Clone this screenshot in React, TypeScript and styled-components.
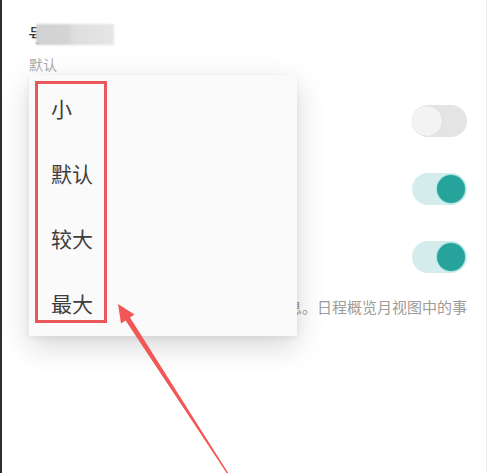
import styled, { createGlobalStyle } from 'styled-components';

const GlobalStyle = createGlobalStyle`
  html, body {
    margin: 0;
    padding: 0;
    background: #ffffff;
  }
  body {
    font-family: 'Noto Sans CJK SC', 'Noto Sans', sans-serif;
  }
`;

const Screen = styled.div`
  position: relative;
  box-sizing: border-box;
  width: 487px;
  height: 473px;
  overflow: hidden;
  background: #ffffff;
  border-left: 2px solid #2e2e2e;
  border-right: 1px solid #ececec;
  padding: 22px 19px 0 26px;
`;

const Title = styled.div`
  display: flex;
  align-items: center;
  height: 24px;
  font-size: 18px;
  color: #333;
`;

const Blurred = styled.span`
  display: inline-block;
  width: 78px;
  height: 21px;
  margin-left: -10px;
  background: linear-gradient(
    90deg,
    #d2d2d2 0%,
    #d4d4d4 40%,
    #dedede 50%,
    #e1e1e1 70%,
    #e6e6e6 100%
  );
  filter: blur(1px);
`;

const Subtitle = styled.div`
  margin-top: 8px;
  height: 20px;
  line-height: 20px;
  font-size: 14px;
  color: #ababab;
  padding-left: 1px;
`;

const Rows = styled.div`
  margin-top: 13px;
  display: flex;
  flex-direction: column;
`;

const Row = styled.div`
  height: 68px;
  display: flex;
  align-items: center;
  justify-content: flex-end;
`;

const Track = styled.div<{ on: boolean }>`
  position: relative;
  width: 55px;
  height: 32px;
  border-radius: 16px;
  background: ${({ on }) => (on ? '#d4ecec' : '#e4e4e4')};
  display: flex;
  align-items: center;
  justify-content: ${({ on }) => (on ? 'flex-end' : 'flex-start')};
  padding: 0 2px;
  box-sizing: border-box;
`;

const Thumb = styled.div<{ on: boolean }>`
  width: ${({ on }) => (on ? '28px' : '30px')};
  height: ${({ on }) => (on ? '28px' : '30px')};
  margin-left: ${({ on }) => (on ? '0' : '-2px')};
  border-radius: 50%;
  background: ${({ on }) => (on ? '#26a39b' : '#f3f3f3')};
  box-shadow: ${({ on }) =>
    on ? '0 0 0 1px rgba(110, 220, 215, 0.45)' : '0 0 1px rgba(0,0,0,0.12)'};
`;

const Description = styled.div`
  margin-top: 6px;
  height: 20px;
  line-height: 20px;
  font-size: 15px;
  color: #9c9c9c;
  text-align: right;
  white-space: nowrap;
`;

const Menu = styled.div`
  position: absolute;
  top: 75px;
  left: 27px;
  width: 268px;
  height: 261px;
  box-sizing: border-box;
  padding-top: 0;
  background: #fafafa;
  box-shadow: 0 10px 28px rgba(0, 0, 0, 0.16), 0 2px 6px rgba(0, 0, 0, 0.06);
  display: flex;
  flex-direction: column;
`;

const MenuItem = styled.div`
  height: 65px;
  display: flex;
  align-items: center;
  padding-left: 22px;
  font-size: 21px;
  color: #3d3d3d;
`;

const Highlight = styled.div`
  position: absolute;
  top: 6px;
  left: 6px;
  width: 72px;
  height: 242px;
  box-sizing: border-box;
  border: 3px solid #e9575a;
  pointer-events: none;
`;

const ArrowLayer = styled.svg`
  position: absolute;
  top: 0;
  left: -2px;
  pointer-events: none;
`;

const sizes = ['小', '默认', '较大', '最大'];
const toggles = [false, true, true];

export default function App() {
  return (
    <>
      <GlobalStyle />
      <Screen>
        <Title>
          号<Blurred />
        </Title>
        <Subtitle>默认</Subtitle>
        <Rows>
          {toggles.map((on, i) => (
            <Row key={i}>
              <Track on={on}>
                <Thumb on={on} />
              </Track>
            </Row>
          ))}
        </Rows>
        <Description>息。日程概览月视图中的事</Description>

        <Menu>
          {sizes.map((s) => (
            <MenuItem key={s}>{s}</MenuItem>
          ))}
          <Highlight />
        </Menu>

        <ArrowLayer width="493" height="473" viewBox="0 0 493 473">
          <polygon
            points="118,304 134.5,314.5 130,317.5 232,479 231,479.6 125.6,320.6 121,323.5"
            fill="#f25757"
          />
        </ArrowLayer>
      </Screen>
    </>
  );
}
